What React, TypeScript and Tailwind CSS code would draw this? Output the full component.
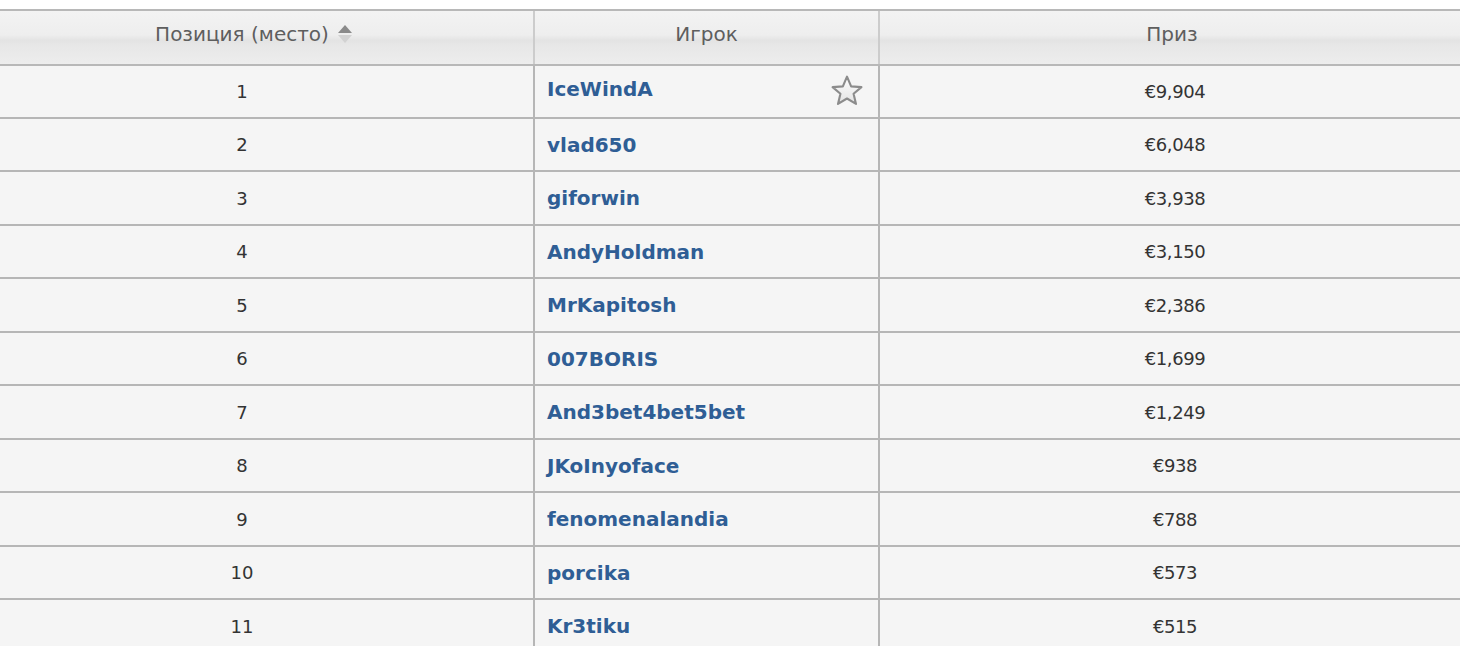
import React from "react";

const rows: [string, string, string, number][] = [
  ["1", "IceWindA", "€9,904", 53],
  ["2", "vlad650", "€6,048", 53],
  ["3", "giforwin", "€3,938", 54],
  ["4", "AndyHoldman", "€3,150", 53],
  ["5", "MrKapitosh", "€2,386", 54],
  ["6", "007BORIS", "€1,699", 53],
  ["7", "And3bet4bet5bet", "€1,249", 54],
  ["8", "JKoInyoface", "€938", 53],
  ["9", "fenomenalandia", "€788", 54],
  ["10", "porcika", "€573", 53],
  ["11", "Kr3tiku", "€515", 54],
];

function Star() {
  return (
    <svg width="36" height="36" viewBox="0 0 34 34">
      <defs>
        <linearGradient id="sg" x1="0" y1="0" x2="0" y2="1">
          <stop offset="0" stopColor="#ffffff" />
          <stop offset="1" stopColor="#e2e2e2" />
        </linearGradient>
      </defs>
      <path
        d="M17 3.5 L20.9 12.6 L30.6 13.3 L23.2 19.6 L25.5 29.2 L17 24.1 L8.5 29.2 L10.8 19.6 L3.4 13.3 L13.1 12.6 Z"
        fill="url(#sg)"
        stroke="#8c8c8c"
        strokeWidth="2"
        strokeLinejoin="round"
      />
    </svg>
  );
}

function SortIcon() {
  return (
    <svg width="16" height="22" viewBox="0 0 16 22">
      <path d="M8 2 L15 10 L1 10 Z" fill="#8a8a8a" />
      <path d="M1 12 L15 12 L8 20 Z" fill="#d2d2d2" />
    </svg>
  );
}

export default function App() {
  const font = { fontFamily: '"DejaVu Sans", Verdana, sans-serif' };
  return (
    <div className="w-[1460px] h-[646px] overflow-hidden bg-white" style={font}>
      <div className="h-[9px] bg-white" />
      <div className="grid grid-cols-[535px_345px_580px] h-[57px] border-t-2 border-b-2 border-[#b8b8b8] bg-[linear-gradient(to_bottom,#f3f3f3_0%,#eeeeee_45%,#e3e3e3_56%,#e7e7e7_64%,#ededed_100%)] text-[20px] text-[#5e5e5e]">
        <div className="relative flex items-center justify-center pr-[49px] pb-[7px] border-r-2 border-[#cccccc]">
          <span>Позиция (место)</span>
          <span className="absolute left-[337px] top-[12px]">
            <SortIcon />
          </span>
        </div>
        <div className="flex items-center justify-center pb-[7px] border-r-2 border-[#cccccc]">
          <span>Игрок</span>
        </div>
        <div className="flex items-center justify-center pl-[4px] pb-[7px]">
          <span>Приз</span>
        </div>
      </div>
      {rows.map(([pos, name, prize, h], i) => (
        <div
          key={pos}
          className="grid grid-cols-[535px_345px_580px] border-b-2 border-[#b6b6b6] bg-[#f5f5f5]"
          style={{ height: h }}
        >
          <div className="flex items-center justify-center pr-[49px] border-r-2 border-[#b6b6b6] text-[18px] text-[#333]">
            {pos}
          </div>
          <div className="relative flex items-center pl-[12px] border-r-2 border-[#b6b6b6]">
            <span className={"text-[20px] font-bold text-[#2f5e95]" + (i === 0 ? " -mt-[6px]" : "")}>
              {name}
            </span>
            {i === 0 && (
              <span className="absolute left-[294px] top-[7px]">
                <Star />
              </span>
            )}
          </div>
          <div className="flex items-center justify-center pl-[10px] text-[18px] tracking-[-0.4px] text-[#333]">
            {prize}
          </div>
        </div>
      ))}
    </div>
  );
}
